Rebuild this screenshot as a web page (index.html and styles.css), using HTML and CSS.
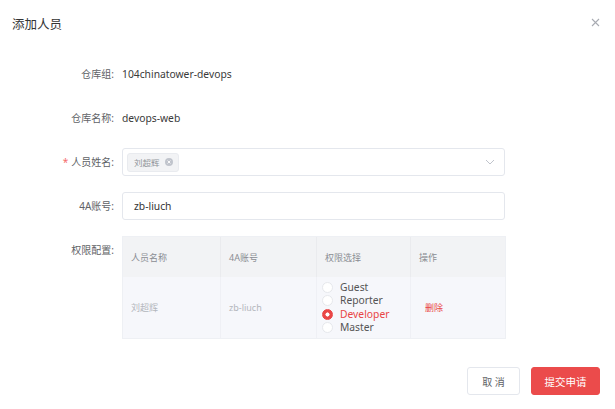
FILE: index.html
```html
<!DOCTYPE html>
<html lang="zh">
<head>
<meta charset="utf-8">
<title>添加人员</title>
<link rel="stylesheet" href="styles.css">
</head>
<body>
<div class="dialog">
  <div class="dialog-header">
    <span class="dialog-title">添加人员</span>
    <button class="dialog-close" aria-label="关闭">
      <svg width="9" height="9" viewBox="0 0 9 9"><path d="M1 1L8 8M8 1L1 8" stroke="#a8abb2" stroke-width="1.1" fill="none"/></svg>
    </button>
  </div>
  <div class="dialog-body">
    <div class="form-row">
      <label class="form-label">仓库组:</label>
      <div class="form-value">104chinatower-devops</div>
    </div>
    <div class="form-row">
      <label class="form-label">仓库名称:</label>
      <div class="form-value">devops-web</div>
    </div>
    <div class="form-row">
      <label class="form-label"><span class="req">*</span>人员姓名:</label>
      <div class="select">
        <span class="tag">刘超辉<span class="tag-close"><svg width="8" height="8" viewBox="0 0 8 8"><circle cx="4" cy="4" r="4" fill="#c0c4cc"/><path d="M2.6 2.6L5.4 5.4M5.4 2.6L2.6 5.4" stroke="#fff" stroke-width="0.9"/></svg></span></span>
        <svg class="chevron" width="10" height="6" viewBox="0 0 10 6"><path d="M1 1L5 5L9 1" stroke="#c0c4cc" stroke-width="1" fill="none"/></svg>
      </div>
    </div>
    <div class="form-row">
      <label class="form-label">4A账号:</label>
      <div class="input">zb-liuch</div>
    </div>
    <div class="form-row">
      <label class="form-label">权限配置:</label>
      <div class="table">
        <div class="thead">
          <div class="th">人员名称</div>
          <div class="th">4A账号</div>
          <div class="th">权限选择</div>
          <div class="th">操作</div>
        </div>
        <div class="tbody">
          <div class="td muted">刘超辉</div>
          <div class="td muted">zb-liuch</div>
          <div class="td radios">
            <div class="radio"><span class="dot"></span>Guest</div>
            <div class="radio"><span class="dot"></span>Reporter</div>
            <div class="radio checked"><span class="dot"></span>Developer</div>
            <div class="radio"><span class="dot"></span>Master</div>
          </div>
          <div class="td"><span class="del">删除</span></div>
        </div>
      </div>
    </div>
  </div>
  <div class="dialog-footer">
    <button class="btn">取 消</button>
    <button class="btn btn-primary">提交申请</button>
  </div>
</div>
</body>
</html>
```
FILE: styles.css
```css
* { box-sizing: border-box; }
html, body { margin: 0; padding: 0; background: #fff; }
body {
  font-family: "Noto Sans", "Noto Sans CJK SC", sans-serif;
  color: #333;
  width: 615px;
  height: 409px;
  overflow: hidden;
}
.dialog { display: flex; flex-direction: column; }
.dialog-header {
  height: 60px;
  padding: 0 12px 0 12px;
  display: flex;
  justify-content: space-between;
  align-items: flex-start;
}
.dialog-title {
  font-size: 12.5px;
  line-height: 20px;
  margin-top: 15px;
  color: #333;
}
.dialog-close {
  border: 0;
  background: none;
  padding: 0;
  margin-top: 18px;
  margin-right: 3px;
  width: 9px;
  height: 9px;
  display: flex;
}
.dialog-body {
  display: flex;
  flex-direction: column;
  gap: 16px;
}
.form-row {
  display: flex;
  align-items: flex-start;
  gap: 8px;
}
.form-label {
  width: 114px;
  text-align: right;
  font-size: 10px;
  line-height: 28px;
  color: #606266;
  flex: none;
}
.req { color: #f56c6c; margin-right: 3px; }
.form-value {
  font-size: 10.3px;
  line-height: 28px;
  color: #3a3a3a;
}
.select, .input {
  width: 383px;
  height: 28px;
  border: 1px solid #e4e7ed;
  border-radius: 3px;
  display: flex;
  align-items: center;
}
.select { padding: 0 9px 0 4px; justify-content: space-between; }
.input { padding: 0 11px; font-size: 10.3px; color: #333; }
.tag {
  display: flex;
  align-items: center;
  gap: 5px;
  height: 19px;
  padding: 0 5px 0 6px;
  background: #f2f3f5;
  border: 1px solid #e9ebef;
  border-radius: 3px;
  font-size: 8.5px;
  color: #909399;
}
.tag-close { display: flex; }
.chevron { display: block; }
.table {
  width: 384px;
  border: 1px solid #eef0f4;
  font-size: 9px;
}
.thead, .tbody {
  display: grid;
  grid-template-columns: 98px 96px 94px 1fr;
}
.thead { height: 40px; background: #f2f3f5; }
.tbody { height: 61px; background: #f6f7fb; }
.th, .td {
  padding: 0 8px;
  display: flex;
  align-items: center;
  border-right: 1px solid #eaebee;
}
.td { border-right-color: #eff0f5; }
.th:last-child, .td:last-child { border-right: 0; }
.th { color: #8a8d93; }
.muted { color: #b3b6bc; }
.radios {
  flex-direction: column;
  align-items: flex-start;
  justify-content: center;
  padding-left: 5px;
}
.radio {
  display: flex;
  align-items: center;
  gap: 7px;
  font-size: 10.3px;
  line-height: 13.4px;
  color: #555;
}
.dot {
  width: 11px;
  height: 11px;
  border-radius: 50%;
  background: #fff;
  border: 1px solid #e6e8ec;
  flex: none;
}
.radio.checked { color: #e94545; }
.radio.checked .dot {
  border-color: #e94545;
  background: radial-gradient(circle, #fff 0 1.8px, #e94545 2.3px);
}
.del { color: #e94545; padding-left: 6px; }
.dialog-footer {
  display: flex;
  justify-content: flex-end;
  gap: 11px;
  padding: 28px 15px 0 0;
}
.btn {
  height: 28px;
  width: 53px;
  border: 1px solid #e4e7ed;
  border-radius: 3px;
  background: #fff;
  font-family: inherit;
  font-size: 10px;
  color: #606266;
  padding: 0;
}
.btn-primary {
  width: 69px;
  background: #eb4b4b;
  border-color: #eb4b4b;
  color: #fff;
  font-size: 10.5px;
}
```
